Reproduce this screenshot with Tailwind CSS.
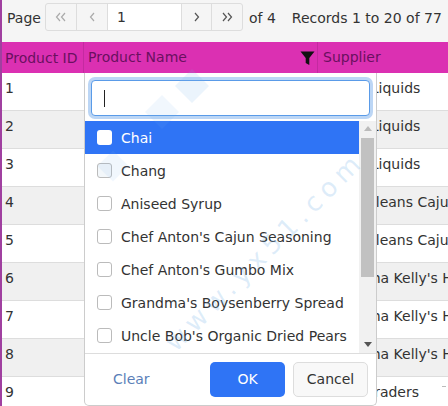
<!DOCTYPE html>
<html>
<head>
<meta charset="utf-8">
<script src="https://cdn.jsdelivr.net/npm/@tailwindcss/browser@4"></script>
</head>
<body class="m-0">
<div class="relative w-[448px] h-[406px] overflow-hidden bg-white border-l-2 border-[#a040a0] font-['DejaVu_Sans',sans-serif] text-[14px] text-[#333]">
  <!-- pager -->
  <div class="h-[42px] bg-[#f5f5f5] flex items-start pt-[3px] pl-[5px] whitespace-nowrap">
    <span class="w-[38px] leading-[30px]">Page</span>
    <div class="flex h-[28px] border border-[#ddd] rounded-[3px] bg-[#f5f5f5] text-[#999]">
      <span class="w-[31px] border-r border-[#ddd] flex items-center justify-center">
        <svg width="12" height="10" viewBox="0 0 12 10" fill="none" stroke="#aaa" stroke-width="1.2"><path d="M5 1 1.5 5 5 9M10 1 6.5 5 10 9"/></svg>
      </span>
      <span class="w-[31px] border-r border-[#ddd] flex items-center justify-center">
        <svg width="8" height="10" viewBox="0 0 8 10" fill="none" stroke="#aaa" stroke-width="1.2"><path d="M6 1 2.5 5 6 9"/></svg>
      </span>
      <span class="w-[73px] bg-white pl-[9px] leading-[26px] text-[#333] border-y border-[#ddd] -my-px">1</span>
      <span class="w-[31px] border-x border-[#ddd] flex items-center justify-center">
        <svg width="8" height="10" viewBox="0 0 8 10" fill="none" stroke="#555" stroke-width="1.2"><path d="M2 1 5.5 5 2 9"/></svg>
      </span>
      <span class="w-[30px] flex items-center justify-center">
        <svg width="12" height="10" viewBox="0 0 12 10" fill="none" stroke="#555" stroke-width="1.2"><path d="M2 1 5.5 5 2 9M7 1 10.5 5 7 9"/></svg>
      </span>
    </div>
    <span class="ml-[6px] leading-[30px]">of 4</span>
    <span class="ml-[16px] leading-[30px]">Records 1 to 20 of 77</span>
  </div>
  <!-- header -->
  <div class="h-[31px] bg-[#db30b2] flex items-center text-[#6a1060] whitespace-nowrap">
    <div class="w-[82px] h-full pl-[3px] leading-[33px] border-r border-[#c42aa0] shrink-0">Product ID</div>
    <div class="w-[234px] h-full pl-[4px] leading-[33px] border-r border-[#c42aa0] shrink-0 flex items-center justify-between pr-[2px]">
      <span>Product Name</span>
      <svg width="15" height="14" viewBox="0 0 14 14" fill="#111"><path d="M0 0.5H14L8.8 7V14L5.2 12V7Z"/></svg>
    </div>
    <div class="pl-[5px] leading-[33px]">Supplier</div>
  </div>
  <!-- rows -->
  <div class="text-[#333] whitespace-nowrap">
    <div class="h-[38px] flex pt-[5px] bg-white border-b border-[#ddd]"><span class="w-[322px] shrink-0 pl-[3px]">1</span><span>Exotic Liquids</span></div>
    <div class="h-[38px] flex pt-[5px] bg-[#f0f0f0] border-b border-[#ddd]"><span class="w-[322px] shrink-0 pl-[3px]">2</span><span>Exotic Liquids</span></div>
    <div class="h-[38px] flex pt-[5px] bg-white border-b border-[#ddd]"><span class="w-[322px] shrink-0 pl-[3px]">3</span><span>Exotic Liquids</span></div>
    <div class="h-[38px] flex pt-[5px] bg-[#f0f0f0] border-b border-[#ddd]"><span class="w-[322px] shrink-0 pl-[3px]">4</span><span>New Orleans Cajun</span></div>
    <div class="h-[38px] flex pt-[5px] bg-white border-b border-[#ddd]"><span class="w-[322px] shrink-0 pl-[3px]">5</span><span>New Orleans Cajun</span></div>
    <div class="h-[38px] flex pt-[5px] bg-[#f0f0f0] border-b border-[#ddd]"><span class="w-[322px] shrink-0 pl-[3px]">6</span><span>Grandma Kelly's Homestead</span></div>
    <div class="h-[38px] flex pt-[5px] bg-white border-b border-[#ddd]"><span class="w-[322px] shrink-0 pl-[3px]">7</span><span>Grandma Kelly's Homestead</span></div>
    <div class="h-[38px] flex pt-[5px] bg-[#f0f0f0] border-b border-[#ddd]"><span class="w-[322px] shrink-0 pl-[3px]">8</span><span>Grandma Kelly's Homestead</span></div>
    <div class="h-[38px] flex pt-[5px] bg-white"><span class="w-[322px] shrink-0 pl-[3px]">9</span><span>Tokyo Traders</span><span class="ml-[23px] mt-[4px] w-[4px] h-px bg-[#bbb]"></span></div>
  </div>
  <!-- filter popup -->
  <div class="absolute left-[82px] top-[73px] w-[293px] h-[333px] bg-white rounded-b-[5px] border border-t-0 border-[#ccc] flex flex-col">
    <div class="h-[48px] shrink-0 px-[6px] pt-[7px]">
      <div class="h-[36px] w-[279px] rounded-[4px] border border-[#5a9be8] ring-[3px] ring-[#bcd6f5] bg-white flex items-center pl-[12px]">
        <span class="w-px h-[17px] bg-[#222]"></span>
      </div>
    </div>
    <div class="h-[232px] flex shrink-0">
      <div class="w-[274px] shrink-0 whitespace-nowrap">
        <div class="h-[33px] bg-[#2f74f5] text-white flex items-center pl-[12px] gap-[9px]"><span class="w-[15px] h-[15px] rounded-[3px] bg-white"></span><span class="pt-[2px]">Chai</span></div>
        <div class="h-[33px] flex items-center pl-[12px] gap-[9px]"><span class="w-[15px] h-[15px] rounded-[3px] border border-[#bbb] bg-[#f3f7fa]"></span><span class="pt-[2px]">Chang</span></div>
        <div class="h-[33px] flex items-center pl-[12px] gap-[9px]"><span class="w-[15px] h-[15px] rounded-[3px] border border-[#bbb]"></span><span class="pt-[2px]">Aniseed Syrup</span></div>
        <div class="h-[33px] flex items-center pl-[12px] gap-[9px]"><span class="w-[15px] h-[15px] rounded-[3px] border border-[#bbb]"></span><span class="pt-[2px]">Chef Anton's Cajun Seasoning</span></div>
        <div class="h-[33px] flex items-center pl-[12px] gap-[9px]"><span class="w-[15px] h-[15px] rounded-[3px] border border-[#bbb]"></span><span class="pt-[2px]">Chef Anton's Gumbo Mix</span></div>
        <div class="h-[33px] flex items-center pl-[12px] gap-[9px]"><span class="w-[15px] h-[15px] rounded-[3px] border border-[#bbb]"></span><span class="pt-[2px]">Grandma's Boysenberry Spread</span></div>
        <div class="h-[33px] flex items-center pl-[12px] gap-[9px]"><span class="w-[15px] h-[15px] rounded-[3px] border border-[#bbb]"></span><span class="pt-[2px]">Uncle Bob's Organic Dried Pears</span></div>
      </div>
      <div class="w-[17px] bg-[#f1f1f1] flex flex-col items-center px-[2px]">
        <svg class="mt-[5px] shrink-0" width="8" height="5" viewBox="0 0 8 5" fill="#bbb"><path d="M4 0 8 5H0Z"/></svg>
        <div class="w-[13px] h-[139px] bg-[#c1c1c1] mt-[7px]"></div>
        <svg class="mt-auto mb-[6px] shrink-0" width="8" height="5" viewBox="0 0 8 5" fill="#555"><path d="M0 0H8L4 5Z"/></svg>
      </div>
    </div>
    <div class="flex-1 border-t border-[#ddd] flex items-start pt-[8px] pl-[28px]">
      <span class="w-[97px] leading-[35px] text-[#5b7fb8]">Clear</span>
      <span class="w-[75px] h-[35px] rounded-[5px] bg-[#2f74f5] text-white flex items-center justify-center">OK</span>
      <span class="ml-[8px] w-[75px] h-[35px] rounded-[5px] border border-[#ddd] bg-[#f8f8f8] flex items-center justify-center">Cancel</span>
    </div>
  </div>
  <!-- watermark -->
  <div class="absolute left-[178px] top-[74px] w-[24px] h-[24px] -rotate-45 bg-[#7ab4e8]/15 pointer-events-none"></div>
  <div class="absolute left-[148px] top-[100px] w-[24px] h-[24px] -rotate-45 bg-[#7ab4e8]/10 pointer-events-none"></div>
  <div class="absolute left-[100px] top-[155px] w-[22px] h-[22px] -rotate-45 bg-[#7ab4e8]/10 pointer-events-none"></div>
  <div class="absolute left-[123px] top-[232px] w-[280px] text-center -rotate-45 text-[26px] tracking-[6px] text-[#7ab4e8]/25 whitespace-nowrap pointer-events-none">www.yx51.com</div>
</div>
</body>
</html>
